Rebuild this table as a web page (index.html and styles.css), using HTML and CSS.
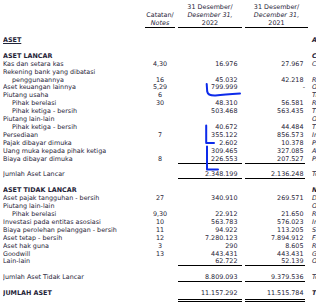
FILE: index.html
```html
<!DOCTYPE html>
<html lang="id">
<head>
<meta charset="utf-8">
<title>Laporan Posisi Keuangan</title>
<link rel="stylesheet" href="styles.css">
</head>
<body>
<table class="fs">
  <colgroup>
    <col class="c-label"><col class="c-note"><col class="c-y22"><col class="c-y21"><col class="c-en">
  </colgroup>
  <thead>
    <tr class="head">
      <th class="lbl"></th>
      <th class="hd"><span class="blank-line">&nbsp;</span><br>Catatan/<br><i>Notes</i></th>
      <th class="hd">31 Desember/<br><i>Desember 31,</i><br>2022</th>
      <th class="hd">31 Desember/<br><i>December 31,</i><br>2021</th>
      <th class="en"></th>
    </tr>
    <tr class="spacer"><td colspan="5"></td></tr>
  </thead>
  <tbody>
    <tr class="bold"><td class="lbl"><u>ASET</u></td><td class="note"></td><td class="v22"></td><td class="v21"></td><td class="en">ASSETS</td></tr>
    <tr class="blank"><td colspan="5">&nbsp;</td></tr>
    <tr class="bold"><td class="lbl">ASET LANCAR</td><td class="note"></td><td class="v22"></td><td class="v21"></td><td class="en">CURRENT ASSETS</td></tr>
    <tr><td class="lbl">Kas dan setara kas</td><td class="note">4,30</td><td class="v22">16.976</td><td class="v21">27.967</td><td class="en">Cash and cash equivalents</td></tr>
    <tr><td class="lbl">Rekening bank yang dibatasi</td><td class="note"></td><td class="v22"></td><td class="v21"></td><td class="en"></td></tr>
    <tr><td class="lbl ind">penggunaannya</td><td class="note">16</td><td class="v22">45.032</td><td class="v21">42.218</td><td class="en">Restricted cash</td></tr>
    <tr><td class="lbl">Aset keuangan lainnya</td><td class="note">5,29</td><td class="v22">799.999</td><td class="v21 dash">-</td><td class="en">Other financial assets</td></tr>
    <tr><td class="lbl">Piutang usaha</td><td class="note">6</td><td class="v22"></td><td class="v21"></td><td class="en">Trade receivables</td></tr>
    <tr><td class="lbl ind">Pihak berelasi</td><td class="note">30</td><td class="v22">48.310</td><td class="v21">56.581</td><td class="en ind">Related parties</td></tr>
    <tr><td class="lbl ind">Pihak ketiga - bersih</td><td class="note"></td><td class="v22">503.468</td><td class="v21">563.435</td><td class="en ind">Third parties - net</td></tr>
    <tr><td class="lbl">Piutang lain-lain</td><td class="note"></td><td class="v22"></td><td class="v21"></td><td class="en">Other receivables</td></tr>
    <tr><td class="lbl ind">Pihak ketiga - bersih</td><td class="note"></td><td class="v22">40.672</td><td class="v21">44.484</td><td class="en ind">Third parties - net</td></tr>
    <tr><td class="lbl">Persediaan</td><td class="note">7</td><td class="v22">355.122</td><td class="v21">856.573</td><td class="en">Inventories</td></tr>
    <tr><td class="lbl">Pajak dibayar dimuka</td><td class="note"></td><td class="v22">2.602</td><td class="v21">10.378</td><td class="en">Prepaid taxes</td></tr>
    <tr><td class="lbl">Uang muka kepada pihak ketiga</td><td class="note"></td><td class="v22">309.465</td><td class="v21">327.085</td><td class="en">Advances to third parties</td></tr>
    <tr><td class="lbl">Biaya dibayar dimuka</td><td class="note">8</td><td class="v22 ul">226.553</td><td class="v21 ul">207.527</td><td class="en">Prepaid expenses</td></tr>
    <tr class="blank"><td colspan="5">&nbsp;</td></tr>
    <tr><td class="lbl">Jumlah Aset Lancar</td><td class="note"></td><td class="v22 ul">2.348.199</td><td class="v21 ul">2.136.248</td><td class="en">Total Current Assets</td></tr>
    <tr class="blank"><td colspan="5">&nbsp;</td></tr>
    <tr class="bold"><td class="lbl">ASET TIDAK LANCAR</td><td class="note"></td><td class="v22"></td><td class="v21"></td><td class="en">NON-CURRENT ASSETS</td></tr>
    <tr><td class="lbl">Aset pajak tangguhan - bersih</td><td class="note">27</td><td class="v22">340.910</td><td class="v21">269.571</td><td class="en">Deferred tax assets - net</td></tr>
    <tr><td class="lbl">Piutang lain-lain</td><td class="note"></td><td class="v22"></td><td class="v21"></td><td class="en">Other receivables</td></tr>
    <tr><td class="lbl ind">Pihak berelasi</td><td class="note">9,30</td><td class="v22">22.912</td><td class="v21">21.650</td><td class="en ind">Related parties</td></tr>
    <tr><td class="lbl">Investasi pada entitas asosiasi</td><td class="note">10</td><td class="v22">563.783</td><td class="v21">576.023</td><td class="en">Investment in associates</td></tr>
    <tr><td class="lbl">Biaya perolehan pelanggan - bersih</td><td class="note">11</td><td class="v22">94.922</td><td class="v21">113.205</td><td class="en">Subscriber acquisition costs - net</td></tr>
    <tr><td class="lbl">Aset tetap - bersih</td><td class="note">12</td><td class="v22">7.280.123</td><td class="v21">7.894.912</td><td class="en">Fixed assets - net</td></tr>
    <tr><td class="lbl">Aset hak guna</td><td class="note">3</td><td class="v22">290</td><td class="v21">8.605</td><td class="en">Right-of-use assets</td></tr>
    <tr><td class="lbl">Goodwill</td><td class="note">13</td><td class="v22">443.431</td><td class="v21">443.431</td><td class="en">Goodwill</td></tr>
    <tr><td class="lbl">Lain-lain</td><td class="note"></td><td class="v22 ul">62.722</td><td class="v21 ul">52.139</td><td class="en">Others</td></tr>
    <tr class="blank"><td colspan="5">&nbsp;</td></tr>
    <tr><td class="lbl">Jumlah Aset Tidak Lancar</td><td class="note"></td><td class="v22 ul">8.809.093</td><td class="v21 ul">9.379.536</td><td class="en">Total Non-current Assets</td></tr>
    <tr class="blank"><td colspan="5">&nbsp;</td></tr>
    <tr class="bold total"><td class="lbl">JUMLAH ASET</td><td class="note"></td><td class="v22 dul">11.157.292</td><td class="v21 dul">11.515.784</td><td class="en">TOTAL ASSETS</td></tr>
  </tbody>
</table>

<svg class="marks" width="316" height="305" viewBox="0 0 316 305" aria-hidden="true">
  <path d="M206.7 84 L207.2 91.5 Q208 95.8 215.5 95.5 Q224 94.6 240 93.6"/>
  <path d="M206.2 125.5 L206.2 143 L214 143"/>
  <path d="M207 146.5 L207 169.6 L218 169.6"/>
</svg>
</body>
</html>
```

FILE: styles.css
```css
html, body {
  margin: 0;
  padding: 0;
  background: #ffffff;
}

body {
  position: relative;
  width: 316px;
  height: 305px;
  overflow: hidden;
  font-family: "DejaVu Sans", Verdana, sans-serif;
  font-size: 6.4px;
  color: #1f2438;
}

.fs {
  border-collapse: separate;
  border-spacing: 3px 0;
  table-layout: fixed;
  width: 514px;
  margin-top: 3.3px;
}

.c-label { width: 139px; }
.c-note { width: 30px; }
.c-y22 { width: 64px; }
.c-y21 { width: 63px; }
.c-en { width: 200px; }

.fs td, .fs th {
  padding: 0;
  line-height: 7.9px;
  white-space: nowrap;
  overflow: hidden;
  vertical-align: middle;
}

.head th {
  font-weight: normal;
  line-height: 8px;
  vertical-align: bottom;
}

.head .hd {
  text-align: center;
  border-bottom: 1px solid #000;
}

.spacer td {
  height: 8.75px;
  line-height: 0;
}

.lbl { text-align: left; }
.ind { padding-left: 9px !important; }

.note { text-align: center; }

.v22 {
  text-align: right;
  padding-right: 4.5px !important;
}

.v21 {
  text-align: right;
  padding-right: 4.5px !important;
}

.dash { padding-right: 3px !important; }

.en {
  font-style: italic;
  padding-left: 1px !important;
}

.bold td { font-weight: bold; }
.total .v22, .total .v21 { font-weight: normal; }

.ul {
  background: linear-gradient(#000, #000) left bottom / 100% 1px no-repeat;
}

.v21.ul {
  background-size: calc(100% - 3px) 1px;
}

.total td {
  padding-bottom: 4px;
}

.dul {
  background:
    linear-gradient(#000, #000) left bottom / 100% 1px no-repeat,
    linear-gradient(#000, #000) left calc(100% - 2px) / 100% 1px no-repeat;
}

.v21.dul {
  background-size: calc(100% - 3px) 1px, calc(100% - 3px) 1px;
}

.marks {
  position: absolute;
  top: 0;
  left: 0;
  pointer-events: none;
}

.marks path {
  fill: none;
  stroke: #0d2bea;
  stroke-width: 2;
  stroke-linecap: round;
  stroke-linejoin: round;
}
```
